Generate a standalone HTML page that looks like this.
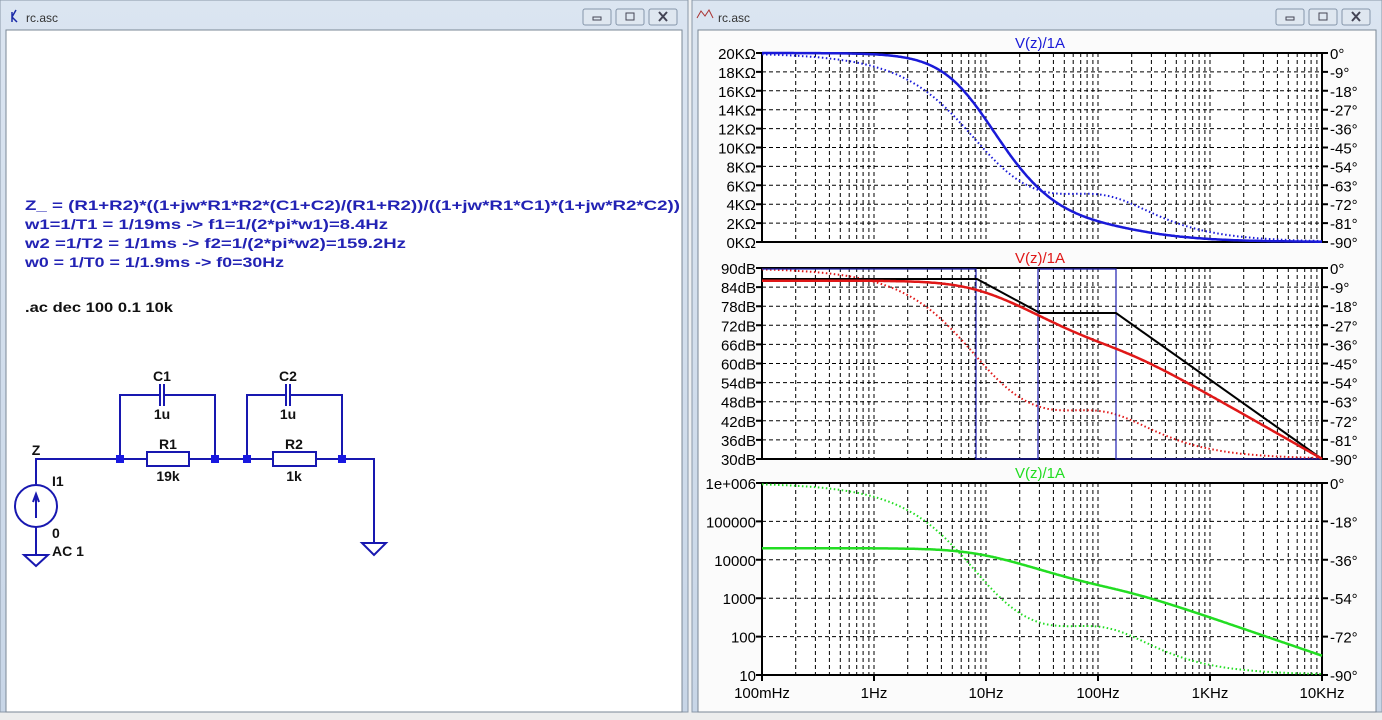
<!DOCTYPE html>
<html><head><meta charset="utf-8"><style>
body{margin:0;width:1382px;height:720px;overflow:hidden;background:#eef0f2;font-family:"Liberation Sans",sans-serif}
svg{display:block}
</style></head><body>
<svg id="s" width="1382" height="720" xmlns="http://www.w3.org/2000/svg">
<defs><linearGradient id="tb" x1="0" y1="0" x2="0" y2="1"><stop offset="0" stop-color="#dbe5f1"/><stop offset="1" stop-color="#c8d6e7"/></linearGradient></defs>
<rect x="0" y="712" width="1382" height="8" fill="#eceded"/>
<!-- left window -->
<rect x="0" y="0" width="688" height="712" fill="url(#tb)" stroke="#8a98a8"/>
<rect x="6" y="30" width="676" height="682" fill="#fff" stroke="#7a8796"/>
<text x="26" y="22" font-size="12" fill="#333">rc.asc</text>
<path d="M12 12 L12 22 M12 17 L16 10 M12 17 L17 22" stroke="#1a2aa8" stroke-width="1.5" fill="none"/>
<g fill="#dfe7f0" stroke="#8596aa"><rect x="583" y="9" width="28" height="16" rx="2"/><rect x="616" y="9" width="28" height="16" rx="2"/><rect x="649" y="9" width="28" height="16" rx="2"/></g>
<g stroke="#445" fill="none"><rect x="593" y="17" width="8" height="3"/><rect x="626" y="13" width="8" height="7"/><path d="M659 12 L667 21 M667 12 L659 21" stroke-width="2"/></g>
<!-- right window -->
<rect x="692" y="0" width="690" height="712" fill="url(#tb)" stroke="#8a98a8"/>
<rect x="698" y="30" width="678" height="682" fill="#fbfbfb" stroke="#7a8796"/>
<text x="718" y="22" font-size="12" fill="#333">rc.asc</text>
<path d="M697 18 L701 11 L705 16 L709 10 L713 18" stroke="#a33" fill="none"/>
<g fill="#dfe7f0" stroke="#8596aa"><rect x="1276" y="9" width="28" height="16" rx="2"/><rect x="1309" y="9" width="28" height="16" rx="2"/><rect x="1342" y="9" width="28" height="16" rx="2"/></g>
<g stroke="#445" fill="none"><rect x="1286" y="17" width="8" height="3"/><rect x="1319" y="13" width="8" height="7"/><path d="M1352 12 L1360 21 M1360 12 L1352 21" stroke-width="2"/></g>

<!-- schematic text -->
<g font-weight="bold" font-size="14" fill="#2222b4">
<text x="25" y="210" textLength="655" lengthAdjust="spacingAndGlyphs">Z_ = (R1+R2)*((1+jw*R1*R2*(C1+C2)/(R1+R2))/((1+jw*R1*C1)*(1+jw*R2*C2))</text>
<text x="25" y="229" textLength="363" lengthAdjust="spacingAndGlyphs">w1=1/T1 = 1/19ms -&gt; f1=1/(2*pi*w1)=8.4Hz</text>
<text x="25" y="248" textLength="381" lengthAdjust="spacingAndGlyphs">w2 =1/T2 = 1/1ms -&gt; f2=1/(2*pi*w2)=159.2Hz</text>
<text x="25" y="267" textLength="259" lengthAdjust="spacingAndGlyphs">w0 = 1/T0 = 1/1.9ms -&gt; f0=30Hz</text>
</g>
<text x="25" y="312" font-weight="bold" font-size="14" fill="#111" textLength="148" lengthAdjust="spacingAndGlyphs">.ac dec 100 0.1 10k</text>
<!-- schematic -->
<g stroke="#1818b0" stroke-width="2" fill="none">
<path d="M36 484 L36 459 L147 459 M189 459 L273 459 M316 459 L374 459 L374 543"/>
<path d="M120 459 L120 395 L160 395 M164 395 L215 395 L215 459"/>
<path d="M247 459 L247 395 L286 395 M290 395 L342 395 L342 459"/>
<path d="M160 384 L160 406 M164 384 L164 406 M286 384 L286 406 M290 384 L290 406"/>
<rect x="147" y="452" width="42" height="14"/><rect x="273" y="452" width="43" height="14"/>
<circle cx="36" cy="506" r="21"/>
<path d="M36 518 L36 496 M33 502 L36 494 L39 502"/>
<path d="M36 527 L36 555 M24 555 L48 555 L36 566 Z M374 543 M362 543 L386 543 L374 555 Z"/>
</g>
<g fill="#1818e0"><rect x="116" y="455" width="8" height="8"/><rect x="211" y="455" width="8" height="8"/><rect x="243" y="455" width="8" height="8"/><rect x="338" y="455" width="8" height="8"/></g>
<g font-weight="bold" font-size="14" fill="#111" text-anchor="middle">
<text x="162" y="381">C1</text><text x="162" y="419">1u</text>
<text x="288" y="381">C2</text><text x="288" y="419">1u</text>
<text x="168" y="449">R1</text><text x="168" y="481">19k</text>
<text x="294" y="449">R2</text><text x="294" y="481">1k</text>
<text x="36" y="455">Z</text>
</g>
<g font-weight="bold" font-size="14" fill="#111"><text x="52" y="486">I1</text><text x="52" y="538">0</text><text x="52" y="556">AC 1</text></g>
<g id="plots"></g>
</svg>
<script>
var NS="http://www.w3.org/2000/svg",P=document.getElementById("plots");
function el(t,a,txt){var e=document.createElementNS(NS,t);for(var k in a)e.setAttribute(k,a[k]);if(txt!=null)e.textContent=txt;P.appendChild(e);return e;}
var X0=762,X1=1322,D=(X1-X0)/5;
function xf(f){return X0+D*(Math.log10(f)+1);}
var panes=[{t:53,b:242,n:10},{t:268,b:459,n:10},{t:483,b:675,n:5}];
var lab=[[],[],["10","100","1000","10000","100000","1e+006"]];
for(var i=0;i<=10;i++){lab[0].push((i*2)+"K\u03A9");lab[1].push((30+6*i)+"dB");}
var cols=["#1a1ad8","#e01818","#22dd22"];
panes.forEach(function(p,pi){
 el("rect",{x:X0,y:p.t,width:X1-X0,height:p.b-p.t,fill:"#fff"});
 var d="";
 for(var dec=0;dec<5;dec++)for(var m=1;m<=9;m++){if(dec==0&&m==1)continue;var x=X0+D*(dec+Math.log10(m));d+="M"+x.toFixed(1)+" "+p.t+"V"+p.b;}
 for(var i=1;i<p.n;i++){var y=p.b-(p.b-p.t)*i/p.n;d+="M"+X0+" "+y.toFixed(1)+"H"+X1;}
 el("path",{d:d,stroke:"#000","stroke-width":1,"stroke-dasharray":"4 3",fill:"none"});
 el("rect",{x:X0,y:p.t,width:X1-X0,height:p.b-p.t,fill:"none",stroke:"#000","stroke-width":2});
 var t="";
 for(var i=0;i<=p.n;i++){var y=p.b-(p.b-p.t)*i/p.n;t+="M"+(X0-6)+" "+y+"H"+X0+"M"+X1+" "+y+"H"+(X1+6);
  el("text",{x:X0-6,y:y+6,"font-size":15,"text-anchor":"end",fill:"#000"},lab[pi][i]);
  var dg=-90+90*i/p.n;el("text",{x:X1+8,y:y+6,"font-size":15,fill:"#000"},(dg==0?"0":Math.round(dg))+"\u00B0");}
 el("path",{d:t,stroke:"#000","stroke-width":2});
 el("text",{x:1040,y:p.t-5,"font-size":15,"text-anchor":"middle",fill:cols[pi]},"V(z)/1A");
});
["100mHz","1Hz","10Hz","100Hz","1KHz","10KHz"].forEach(function(s,i){el("text",{x:X0+D*i,y:698,"font-size":15,"text-anchor":"middle",fill:"#000"},s);
 el("path",{d:"M"+(X0+D*i)+" 675v6",stroke:"#000","stroke-width":2});});
var R1=19e3,C1=1e-6,R2=1e3,C2=1e-6;
function Z(f){var w=2*Math.PI*f;function p(R,C){var a=w*R*C,den=1+a*a;return [R/den,-R*a/den];}var z1=p(R1,C1),z2=p(R2,C2);return [z1[0]+z2[0],z1[1]+z2[1]];}
var m1="",m2="",m3="",ph=[ "","",""];
for(var k=0;k<=500;k++){var f=Math.pow(10,-1+k/100),z=Z(f),mag=Math.hypot(z[0],z[1]),a=Math.atan2(z[1],z[0])*180/Math.PI,x=xf(f).toFixed(1);
 var y1=242-189*mag/20000,db=20*Math.log10(mag),y2=459-191*(db-30)/60,y3=675-192*(Math.log10(mag)-1)/5;
 var c=k?"L":"M";m1+=c+x+" "+y1.toFixed(1);m2+=c+x+" "+y2.toFixed(1);m3+=c+x+" "+y3.toFixed(1);
 panes.forEach(function(p,pi){ph[pi]+=c+x+" "+(p.t+(p.b-p.t)*(-a)/90).toFixed(1);});}
[m1,m2,m3].forEach(function(m,i){el("path",{d:ph[i],stroke:cols[i],"stroke-width":2,fill:"none","stroke-dasharray":"1.5 2.5"});
 if(i==1){el("path",{d:"M762 269 H976 V459 H1038 V269 H1116 V459 H1322",stroke:"#2020b0","stroke-width":1.2,fill:"none"});
 el("path",{d:"M762 279 H977 L1040 313 H1116 L1322 459",stroke:"#000","stroke-width":2,fill:"none"});}
 el("path",{d:m,stroke:cols[i],"stroke-width":2.5,fill:"none"});});
</script>
</body></html>
